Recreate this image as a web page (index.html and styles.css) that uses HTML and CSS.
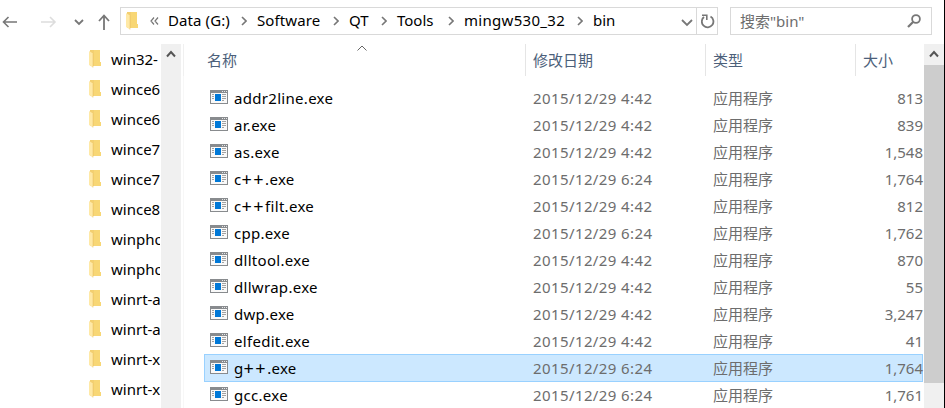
FILE: index.html
```
<!DOCTYPE html>
<html lang="zh-CN">
<head>
<meta charset="utf-8">
<title>bin</title>
<link rel="stylesheet" href="styles.css">
</head>
<body>
<svg class="defs" width="0" height="0" aria-hidden="true">
  <symbol id="folder" viewBox="0 0 12 18">
    <path d="M1 0H11V12H12V16H1Z" fill="#f3cf70"/>
    <path d="M5 0H11V12H12V16H5Z" fill="#f8d775"/>
    <path d="M0 1L4 3.500V17.500L0 15Z" fill="#ffe9a6"/>
    <path d="M4 3.500V17.500" stroke="#edc768" stroke-width=".6"/>
  </symbol>
  <symbol id="exe" viewBox="0 0 18 14">
    <path d="M0 0H18V14H0Z" fill="#888b8e"/>
    <path d="M1 3H17V13H1Z" fill="#f9f9f9"/>
    <path d="M12 1h1v1h-1zM14 1h1v1h-1zM16 1h1v1h-1z" fill="#e8e8e8"/>
    <path d="M5 4H11V11H5Z" fill="#0078d7"/>
    <path d="M2 4.500H4M2 6.500H4M2 8.500H4M12 4.500H16M12 6.500H16M12 8.500H16M12 10.500H14" stroke="#a2a2a2"/>
  </symbol>
  <symbol id="chev" viewBox="0 0 6 10">
    <path d="M1 1L5 5L1 9" fill="none" stroke="#777" stroke-width="1.600"/>
  </symbol>
  <symbol id="up" viewBox="0 0 10 8">
    <path d="M1 6.500L5 2L9 6.500" fill="none" stroke="#555" stroke-width="2"/>
  </symbol>
</svg>
<div class="window">
  <header class="toolbar">
    <nav class="nav">
      <svg class="back" width="16" height="12" viewBox="0 0 16 12"><path d="M15 6H1.500M6.500 1L1.500 6L6.500 11" fill="none" stroke="#777" stroke-width="1.600"/></svg>
      <svg class="forward" width="16" height="12" viewBox="0 0 16 12"><path d="M0 6H14M9 1L14 6L9 11" fill="none" stroke="#ddd" stroke-width="1.600"/></svg>
      <svg class="recent" width="10" height="7" viewBox="0 0 10 7"><path d="M1 1L5 5L9 1" fill="none" stroke="#777" stroke-width="1.800"/></svg>
      <svg class="parent" width="12" height="16" viewBox="0 0 12 16"><path d="M6 16V1.500M1 7L6 1.500L11 7" fill="none" stroke="#777" stroke-width="1.800"/></svg>
    </nav>
    <div class="address">
      <svg class="folder"><use href="#folder"/></svg>
      <svg class="more" width="9" height="8" viewBox="0 0 9 8"><path d="M4 .5L1 4L4 7.500M8 .5L5 4L8 7.500" fill="none" stroke="#777" stroke-width="1.200"/></svg>
      <span class="crumb crumb-drive">Data (G:)</span><svg class="chev"><use href="#chev"/></svg>
      <span class="crumb crumb-software">Software</span><svg class="chev"><use href="#chev"/></svg>
      <span class="crumb crumb-qt">QT</span><svg class="chev"><use href="#chev"/></svg>
      <span class="crumb crumb-tools">Tools</span><svg class="chev"><use href="#chev"/></svg>
      <span class="crumb crumb-mingw">mingw530_32</span><svg class="chev"><use href="#chev"/></svg>
      <span class="crumb crumb-bin">bin</span>
      <svg class="drop" width="12" height="8" viewBox="0 0 12 8"><path d="M1 1L6 6L11 1" fill="none" stroke="#777" stroke-width="1.800"/></svg>
      <span class="refresh"><svg width="14" height="15" viewBox="0 0 14 15"><path d="M9.500 2.500A5.800 5.800 0 1 1 3 3" fill="none" stroke="#777" stroke-width="1.800"/><path d="M1 1.200H5.800V6" fill="none" stroke="#777" stroke-width="1.600"/></svg></span>
    </div>
    <div class="search">
      <span>搜索"bin"</span>
      <svg width="14" height="14" viewBox="0 0 14 14"><circle cx="9" cy="5" r="3.900" fill="none" stroke="#777" stroke-width="1.800"/><path d="M6.300 7.700L1 13" stroke="#777" stroke-width="2.200"/></svg>
    </div>
  </header>
  <main class="content">
    <aside class="tree">
      <div class="node"><svg class="folder"><use href="#folder"/></svg><span>win32-</span></div>
      <div class="node"><svg class="folder"><use href="#folder"/></svg><span>wince6</span></div>
      <div class="node"><svg class="folder"><use href="#folder"/></svg><span>wince6</span></div>
      <div class="node"><svg class="folder"><use href="#folder"/></svg><span>wince7</span></div>
      <div class="node"><svg class="folder"><use href="#folder"/></svg><span>wince7</span></div>
      <div class="node"><svg class="folder"><use href="#folder"/></svg><span>wince8</span></div>
      <div class="node"><svg class="folder"><use href="#folder"/></svg><span>winpho</span></div>
      <div class="node"><svg class="folder"><use href="#folder"/></svg><span>winpho</span></div>
      <div class="node"><svg class="folder"><use href="#folder"/></svg><span>winrt-a</span></div>
      <div class="node"><svg class="folder"><use href="#folder"/></svg><span>winrt-a</span></div>
      <div class="node"><svg class="folder"><use href="#folder"/></svg><span>winrt-x</span></div>
      <div class="node"><svg class="folder"><use href="#folder"/></svg><span>winrt-x</span></div>
    </aside>
    <div class="scroll scroll-tree"><svg class="up"><use href="#up"/></svg></div>
    <section class="files">
      <div class="columns">
        <span class="col-name">名称<svg class="sort" width="10" height="6" viewBox="0 0 10 6"><path d="M.5 5.500L5 1L9.500 5.500" fill="none" stroke="#666"/></svg></span>
        <span>修改日期</span><span>类型</span><span>大小</span>
      </div>
      <div class="rows">
        <div class="row"><span class="name"><svg class="exe"><use href="#exe"/></svg>addr2line.exe</span><span class="date">2015/12/29 4:42</span><span>应用程序</span><span class="size">813</span></div>
        <div class="row"><span class="name"><svg class="exe"><use href="#exe"/></svg>ar.exe</span><span class="date">2015/12/29 4:42</span><span>应用程序</span><span class="size">839</span></div>
        <div class="row"><span class="name"><svg class="exe"><use href="#exe"/></svg>as.exe</span><span class="date">2015/12/29 4:42</span><span>应用程序</span><span class="size">1,548</span></div>
        <div class="row"><span class="name"><svg class="exe"><use href="#exe"/></svg>c<span class="plus">++</span>.exe</span><span class="date">2015/12/29 6:24</span><span>应用程序</span><span class="size">1,764</span></div>
        <div class="row"><span class="name"><svg class="exe"><use href="#exe"/></svg>c<span class="plus">++</span>filt.exe</span><span class="date">2015/12/29 4:42</span><span>应用程序</span><span class="size">812</span></div>
        <div class="row"><span class="name"><svg class="exe"><use href="#exe"/></svg>cpp.exe</span><span class="date">2015/12/29 6:24</span><span>应用程序</span><span class="size">1,762</span></div>
        <div class="row"><span class="name"><svg class="exe"><use href="#exe"/></svg>dlltool.exe</span><span class="date">2015/12/29 4:42</span><span>应用程序</span><span class="size">870</span></div>
        <div class="row"><span class="name"><svg class="exe"><use href="#exe"/></svg>dllwrap.exe</span><span class="date">2015/12/29 4:42</span><span>应用程序</span><span class="size">55</span></div>
        <div class="row"><span class="name"><svg class="exe"><use href="#exe"/></svg>dwp.exe</span><span class="date">2015/12/29 4:42</span><span>应用程序</span><span class="size">3,247</span></div>
        <div class="row"><span class="name"><svg class="exe"><use href="#exe"/></svg>elfedit.exe</span><span class="date">2015/12/29 4:42</span><span>应用程序</span><span class="size">41</span></div>
        <div class="row selected"><span class="name"><svg class="exe"><use href="#exe"/></svg>g<span class="plus">++</span>.exe</span><span class="date">2015/12/29 6:24</span><span>应用程序</span><span class="size">1,764</span></div>
        <div class="row"><span class="name"><svg class="exe"><use href="#exe"/></svg>gcc.exe</span><span class="date">2015/12/29 6:24</span><span>应用程序</span><span class="size">1,761</span></div>
      </div>
    </section>
    <div class="scroll scroll-files"><svg class="up"><use href="#up"/></svg><div class="thumb"></div></div>
  </main>
</div>
</body>
</html>
```
FILE: styles.css
```
* { box-sizing: border-box; }
body {
  margin: 0;
  background: #fff;
  color: #000;
  font: 15px/27px "Noto Sans", "Noto Sans CJK SC", sans-serif;
  white-space: nowrap;
  overflow: hidden;
}
svg { display: block; flex: none; }
.defs { position: absolute; }
.window {
  width: 945px;
  height: 408px;
  border-right: 1px solid #000;
  display: flex;
  flex-direction: column;
  overflow: hidden;
}
.toolbar { display: flex; height: 44px; padding-top: 7px; flex: none; }
.nav { width: 120px; height: 28px; display: flex; align-items: center; padding: 2px 0 0 2px; }
.forward { margin-left: 23px; }
.recent { margin-left: 17px; }
.parent { margin-left: 14px; }
.address {
  width: 598px;
  height: 28px;
  border: 1px solid #d9d9d9;
  display: flex;
  align-items: center;
  padding-left: 5px;
}
.folder { width: 12px; height: 18px; }
.more { margin: 0 9px 0 12px; }
.chev { width: 6px; height: 10px; margin-right: 10px; }
.crumb { line-height: 24px; flex: none; height: 26px; }
.crumb-drive { width: 73px; letter-spacing: .1px; }
.crumb-software { width: 76px; letter-spacing: .1px; }
.crumb-qt { width: 32px; }
.crumb-tools { width: 51px; }
.crumb-mingw { width: 113px; letter-spacing: .3px; }
.drop { margin-left: auto; margin-right: 3px; margin-top: 3px; }
.refresh {
  width: 21px;
  height: 26px;
  border-left: 1px solid #d9d9d9;
  display: flex;
  align-items: center;
  padding-left: 4px;
}
.search {
  width: 202px;
  height: 28px;
  margin-left: 12px;
  border: 1px solid #d9d9d9;
  display: flex;
  align-items: center;
  justify-content: space-between;
  padding: 0 10px 0 9px;
  color: #6d6d6d;
}
.content { display: flex; height: 364px; }
.tree { width: 161px; padding: 0 1px 0 89px; overflow: hidden; }
.node { display: flex; height: 30px; align-items: center; overflow: hidden; }
.node span { margin-left: 10px; }
.scroll { background: #f0f0f0; display: flex; flex-direction: column; align-items: center; padding-top: 6px; }
.up { width: 10px; height: 8px; flex: none; }
.scroll-tree { width: 20px; }
.scroll-files { width: 20px; margin-left: 1px; }
.thumb { width: 20px; height: 318px; margin-top: 7px; background: #cdcdcd; }
.files { width: 742px; padding-left: 2px; }
.columns {
  height: 32px;
  border-left: 1px solid #f0f0f0;
  display: grid;
  grid-template-columns: 342px 180px 150px 67px;
  color: #4c607a;
  line-height: 32px;
}
.columns span { padding-left: 7px; border-right: 1px solid #e5e5e5; }
.columns span:last-child { border: 0; }
.columns .col-name { padding-left: 23px; display: flex; }
.sort { margin: 1px 0 0 120px; }
.rows { border-left: 1px solid #f7f7f7; height: 332px; padding: 8px 0 0 20px; }
.row {
  height: 27px;
  display: grid;
  grid-template-columns: 329px 180px 150px 1fr;
  color: #6d6d6d;
  line-height: 29px;
}
.row .name { color: #000; display: flex; padding-left: 6px; letter-spacing: .3px; }
.plus { font-size: 18px; line-height: 28px; letter-spacing: 1.5px; }
.date { letter-spacing: .4px; }
.exe { width: 18px; height: 14px; margin: 6px 6px 0 0; }
.size { text-align: right; }
.selected { height: 28px; margin-bottom: -1px; background: #cce8ff; box-shadow: inset 0 0 0 1px #99d1ff; }
```
